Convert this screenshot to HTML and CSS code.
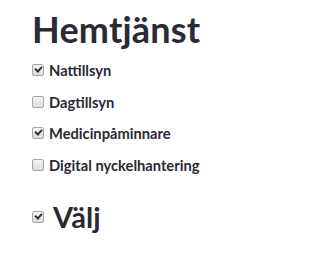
FILE: index.html
```html
<!DOCTYPE html>
<html lang="sv">
<head>
<meta charset="utf-8">
<link rel="stylesheet" href="styles.css">
</head>
<body>
<main class="page">
  <h1 class="title">Hemtjänst</h1>
  <ul class="options">
    <li class="option"><span class="box checked"></span><span class="label">Nattillsyn</span></li>
    <li class="option"><span class="box"></span><span class="label">Dagtillsyn</span></li>
    <li class="option"><span class="box checked"></span><span class="label">Medicinpåminnare</span></li>
    <li class="option"><span class="box"></span><span class="label">Digital nyckelhantering</span></li>
  </ul>
  <div class="choose"><span class="box checked"></span><span class="choose-label">Välj</span></div>
</main>
</body>
</html>
```
FILE: styles.css
```css
html, body {
  margin: 0;
  padding: 0;
  background: #ffffff;
}
.page {
  padding: 8px 0 0 32px;
  font-family: Lato, "Open Sans", sans-serif;
  color: #2a2a35;
}
.title {
  margin: 0;
  font-size: 36px;
  font-weight: 700;
  line-height: 42px;
  letter-spacing: 0.2px;
}
.options {
  list-style: none;
  margin: 11px 0 0 0;
  padding: 0;
  display: flex;
  flex-direction: column;
  gap: 13.5px;
}
.option {
  display: flex;
  align-items: center;
  gap: 5px;
  height: 18px;
}
.label {
  font-size: 14.7px;
  font-weight: 700;
}
.box {
  width: 10px;
  height: 10px;
  border: 1px solid #a8a8a8;
  border-radius: 2px;
  background: linear-gradient(#f4f4f4, #dcdcdc);
  position: relative;
  flex: none;
}
.box.checked::after {
  content: "";
  position: absolute;
  left: 2px;
  top: 1px;
  width: 5px;
  height: 3px;
  border-left: 2px solid #333;
  border-bottom: 2px solid #333;
  transform: rotate(-48deg);
}
.choose {
  display: flex;
  align-items: center;
  gap: 9px;
  margin-top: 26px;
}
.choose-label {
  font-size: 29px;
  font-weight: 700;
  line-height: 34px;
}
```
